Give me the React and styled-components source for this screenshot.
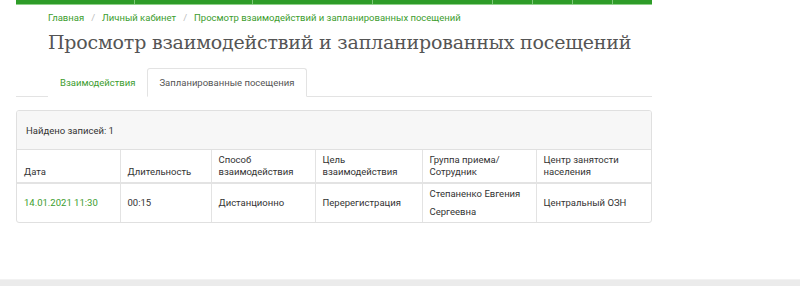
import React from 'react';
import styled, { createGlobalStyle } from 'styled-components';

const GlobalStyle = createGlobalStyle`
  body {
    margin: 0;
    background: #fff;
    font-family: Roboto, "Noto Sans", sans-serif;
    color: #333;
  }
`;

const Page = styled.div`
  display: flex;
  flex-direction: column;
  height: 286px;
`;

const Main = styled.div`
  flex: 1;
  padding-left: 16px;
  width: 636px;
`;

const TopNav = styled.div`
  display: flex;
  height: 4px;
  border-bottom: 1px solid #8fd08a;
`;

const NavItem = styled.div`
  width: ${p => p.w}px;
  background: #2e9c28;
  border-right: 1px solid #7cc777;
  &:last-child { border-right: none; }
`;

const Crumbs = styled.div`
  display: flex;
  align-items: center;
  gap: 7px;
  padding: 6px 0 0 32px;
  font-size: 9.5px;
  line-height: 14px;
`;

const Crumb = styled.a`
  color: #3c9d2e;
  text-decoration: none;
`;

const Sep = styled.span`
  color: #bbb;
`;

const Title = styled.h1`
  margin: 4px 0 0 32px;
  font-family: "DejaVu Serif", serif;
  font-weight: normal;
  font-size: 19px;
  line-height: 26px;
  color: #555;
  letter-spacing: -0.2px;
`;

const Tabs = styled.div`
  display: flex;
  margin-top: 13px;
  padding-left: 32px;
  border-bottom: 1px solid #e3e3e3;
`;

const Tab = styled.div`
  padding: 0 11px;
  height: 27px;
  display: flex;
  align-items: center;
  font-size: 9.5px;
  margin-bottom: -1px;
  border: 1px solid ${p => (p.active ? '#e3e3e3' : 'transparent')};
  border-bottom-color: ${p => (p.active ? '#fff' : 'transparent')};
  border-radius: 3px 3px 0 0;
  background: #fff;
  color: ${p => (p.active ? '#555' : '#3c9d2e')};
`;

const Panel = styled.div`
  margin-top: 13px;
  border: 1px solid #e0e0e0;
  border-radius: 3px;
  overflow: hidden;
`;

const PanelHeading = styled.div`
  background: #f7f7f7;
  padding: 0 9px;
  height: 38px;
  display: flex;
  align-items: center;
  font-size: 9.5px;
  color: #333;
  border-bottom: 1px solid #e0e0e0;
`;

const Table = styled.table`
  width: 100%;
  border-collapse: collapse;
  font-size: 9.5px;
  table-layout: fixed;
`;

const Th = styled.th`
  text-align: left;
  font-weight: normal;
  vertical-align: bottom;
  padding: 0 7px 4px;
  height: 28px;
  line-height: 12px;
  color: #333;
  border-left: 1px solid #e3e3e3;
  border-bottom: 2px solid #e3e3e3;
  &:first-child { border-left: none; }
`;

const Td = styled.td`
  padding: 1px 7px 1px;
  height: 36px;
  line-height: 18px;
  vertical-align: middle;
  color: ${p => (p.link ? '#3c9d2e' : '#333')};
  border-left: 1px solid #e3e3e3;
  &:first-child { border-left: none; }
`;

const Footer = styled.div`
  height: 6px;
  background: #ebebeb;
  border-top: 1px solid #f2f2f2;
`;

const navWidths = [119, 119, 120, 120, 40, 39, 40, 39];

const columns = [
  { title: 'Дата', w: 103 },
  { title: 'Длительность', w: 91 },
  { title: 'Способ взаимодействия', w: 104 },
  { title: 'Цель взаимодействия', w: 107 },
  { title: 'Группа приема/ Сотрудник', w: 114 },
  { title: 'Центр занятости населения', w: 117 },
];

export default function App() {
  return (
    <Page>
      <GlobalStyle />
      <Main>
        <TopNav>
          {navWidths.map((w, i) => <NavItem key={i} w={w} />)}
        </TopNav>
        <Crumbs>
          <Crumb href="#">Главная</Crumb>
          <Sep>/</Sep>
          <Crumb href="#">Личный кабинет</Crumb>
          <Sep>/</Sep>
          <Crumb href="#">Просмотр взаимодействий и запланированных посещений</Crumb>
        </Crumbs>
        <Title>Просмотр взаимодействий и запланированных посещений</Title>
        <Tabs>
          <Tab>Взаимодействия</Tab>
          <Tab active>Запланированные посещения</Tab>
        </Tabs>
        <Panel>
          <PanelHeading>Найдено записей: 1</PanelHeading>
          <Table>
            <colgroup>
              {columns.map(c => <col key={c.title} style={{ width: c.w }} />)}
            </colgroup>
            <thead>
              <tr>
                {columns.map(c => <Th key={c.title}>{c.title}</Th>)}
              </tr>
            </thead>
            <tbody>
              <tr>
                <Td link>14.01.2021 11:30</Td>
                <Td>00:15</Td>
                <Td>Дистанционно</Td>
                <Td>Перерегистрация</Td>
                <Td>Степаненко Евгения Сергеевна</Td>
                <Td>Центральный ОЗН</Td>
              </tr>
            </tbody>
          </Table>
        </Panel>
      </Main>
      <Footer />
    </Page>
  );
}
